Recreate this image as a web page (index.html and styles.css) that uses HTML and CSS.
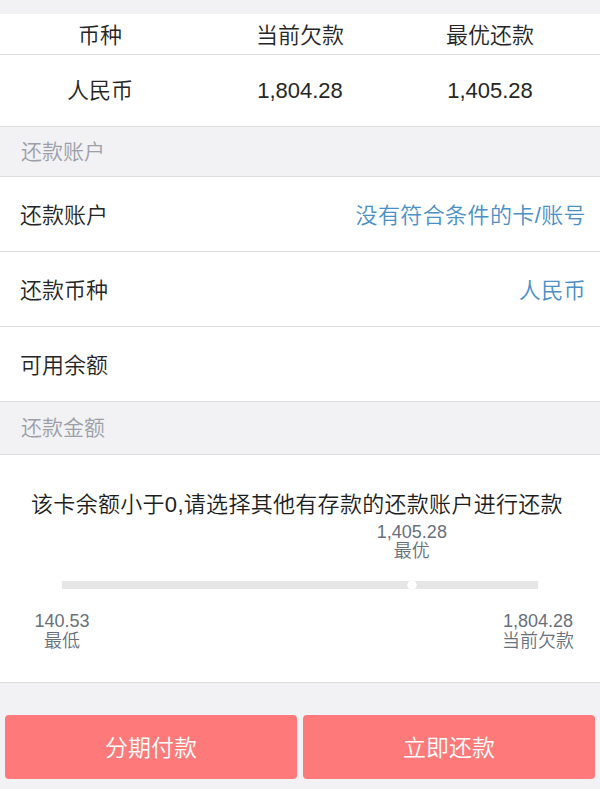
FILE: index.html
```html
<!DOCTYPE html>
<html lang="zh-CN">
<head>
<meta charset="utf-8">
<title>还款</title>
<link rel="stylesheet" href="styles.css">
</head>
<body>
<div class="page">
  <div class="top-gap"></div>
  <div class="debt-table">
    <div class="trow thead">
      <div class="cell">币种</div>
      <div class="cell">当前欠款</div>
      <div class="cell">最优还款</div>
    </div>
    <div class="trow tbody">
      <div class="cell">人民币</div>
      <div class="cell">1,804.28</div>
      <div class="cell">1,405.28</div>
    </div>
  </div>

  <div class="section-title s1">还款账户</div>
  <div class="list">
    <div class="item">
      <span class="item-label">还款账户</span>
      <span class="item-value">没有符合条件的卡/账号</span>
    </div>
    <div class="item">
      <span class="item-label">还款币种</span>
      <span class="item-value">人民币</span>
    </div>
    <div class="item">
      <span class="item-label">可用余额</span>
      <span class="item-value"></span>
    </div>
  </div>

  <div class="section-title s2">还款金额</div>
  <div class="amount">
    <div class="notice">该卡余额小于0,请选择其他有存款的还款账户进行还款</div>
    <div class="slider">
      <div class="thumb-label-row">
        <div class="anchor" style="margin-left: 73.5%">
          <div class="tick-label">
            <div>1,405.28</div>
            <div>最优</div>
          </div>
        </div>
      </div>
      <div class="track">
        <div class="thumb" style="left: 73.5%"></div>
      </div>
      <div class="ends">
        <div class="anchor">
          <div class="tick-label">
            <div>140.53</div>
            <div>最低</div>
          </div>
        </div>
        <div class="anchor">
          <div class="tick-label">
            <div>1,804.28</div>
            <div>当前欠款</div>
          </div>
        </div>
      </div>
    </div>
  </div>

  <div class="actions">
    <button class="btn">分期付款</button>
    <button class="btn">立即还款</button>
  </div>
</div>
</body>
</html>
```

FILE: styles.css
```css
* { box-sizing: border-box; }

html, body {
  margin: 0;
  padding: 0;
}

body {
  background: #f2f2f4;
  font-family: "Liberation Sans", "Noto Sans CJK SC", sans-serif;
  font-weight: 350;
  color: #262626;
  width: 600px;
  height: 789px;
  overflow: hidden;
}

.top-gap { height: 14px; }

.debt-table { background: #fff; }

.trow {
  display: grid;
  grid-template-columns: 200px 200px 1fr;
  padding-right: 20px;
  align-items: center;
  border-bottom: 1px solid #dcdcdc;
}

.cell {
  text-align: center;
  font-size: 22px;
  line-height: 26px;
}

.thead { height: 41px; padding-top: 3px; }
.tbody { height: 72px; }

.section-title {
  padding-left: 21px;
  padding-bottom: 4px;
  font-size: 21px;
  color: #9c9fa8;
  display: flex;
  align-items: center;
  border-bottom: 1px solid #dcdcdc;
}

.s1 { height: 50px; }
.s2 { height: 53px; }

.list { background: #fff; }

.item {
  height: 75px;
  display: flex;
  align-items: center;
  justify-content: space-between;
  padding: 0 14px 3px 20px;
  border-bottom: 1px solid #dcdcdc;
  font-size: 22px;
}

.item-value { color: #4a90c6; letter-spacing: 0.4px; }

.amount {
  background: #fff;
  border-bottom: 1px solid #dcdcdc;
  padding: 35px 0 31px;
}

.notice {
  text-align: center;
  font-size: 22px;
  line-height: 30px;
  letter-spacing: 0.3px;
  color: #1e1e1e;
  padding-right: 6px;
}

.slider {
  width: 476px;
  margin: 3px auto 0;
}

.thumb-label-row { display: flex; }

.anchor {
  width: 0;
  display: flex;
  justify-content: center;
}

.tick-label {
  white-space: nowrap;
  text-align: center;
  font-size: 18px;
  line-height: 19px;
  color: #68707c;
}

.track {
  position: relative;
  height: 8px;
  margin-top: 20px;
  background: #e6e6e6;
}

.thumb {
  position: absolute;
  top: -1px;
  width: 10px;
  height: 10px;
  margin-left: -5px;
  border-radius: 50%;
  background: #fff;
  box-shadow: 0 0 1px rgba(0,0,0,0.15);
}

.ends {
  display: flex;
  justify-content: space-between;
  margin-top: 22px;
}

.ends .tick-label { line-height: 20px; }

.actions {
  display: flex;
  gap: 6px;
  padding: 32px 5px 0;
}

.btn {
  flex: 1;
  height: 64px;
  border: 0;
  border-radius: 4px;
  background: #fe7a7a;
  color: #fff;
  font-family: "Liberation Sans", "Noto Sans CJK SC", sans-serif;
  font-weight: 350;
  font-size: 23px;
  padding: 0 0 3px;
}
```
